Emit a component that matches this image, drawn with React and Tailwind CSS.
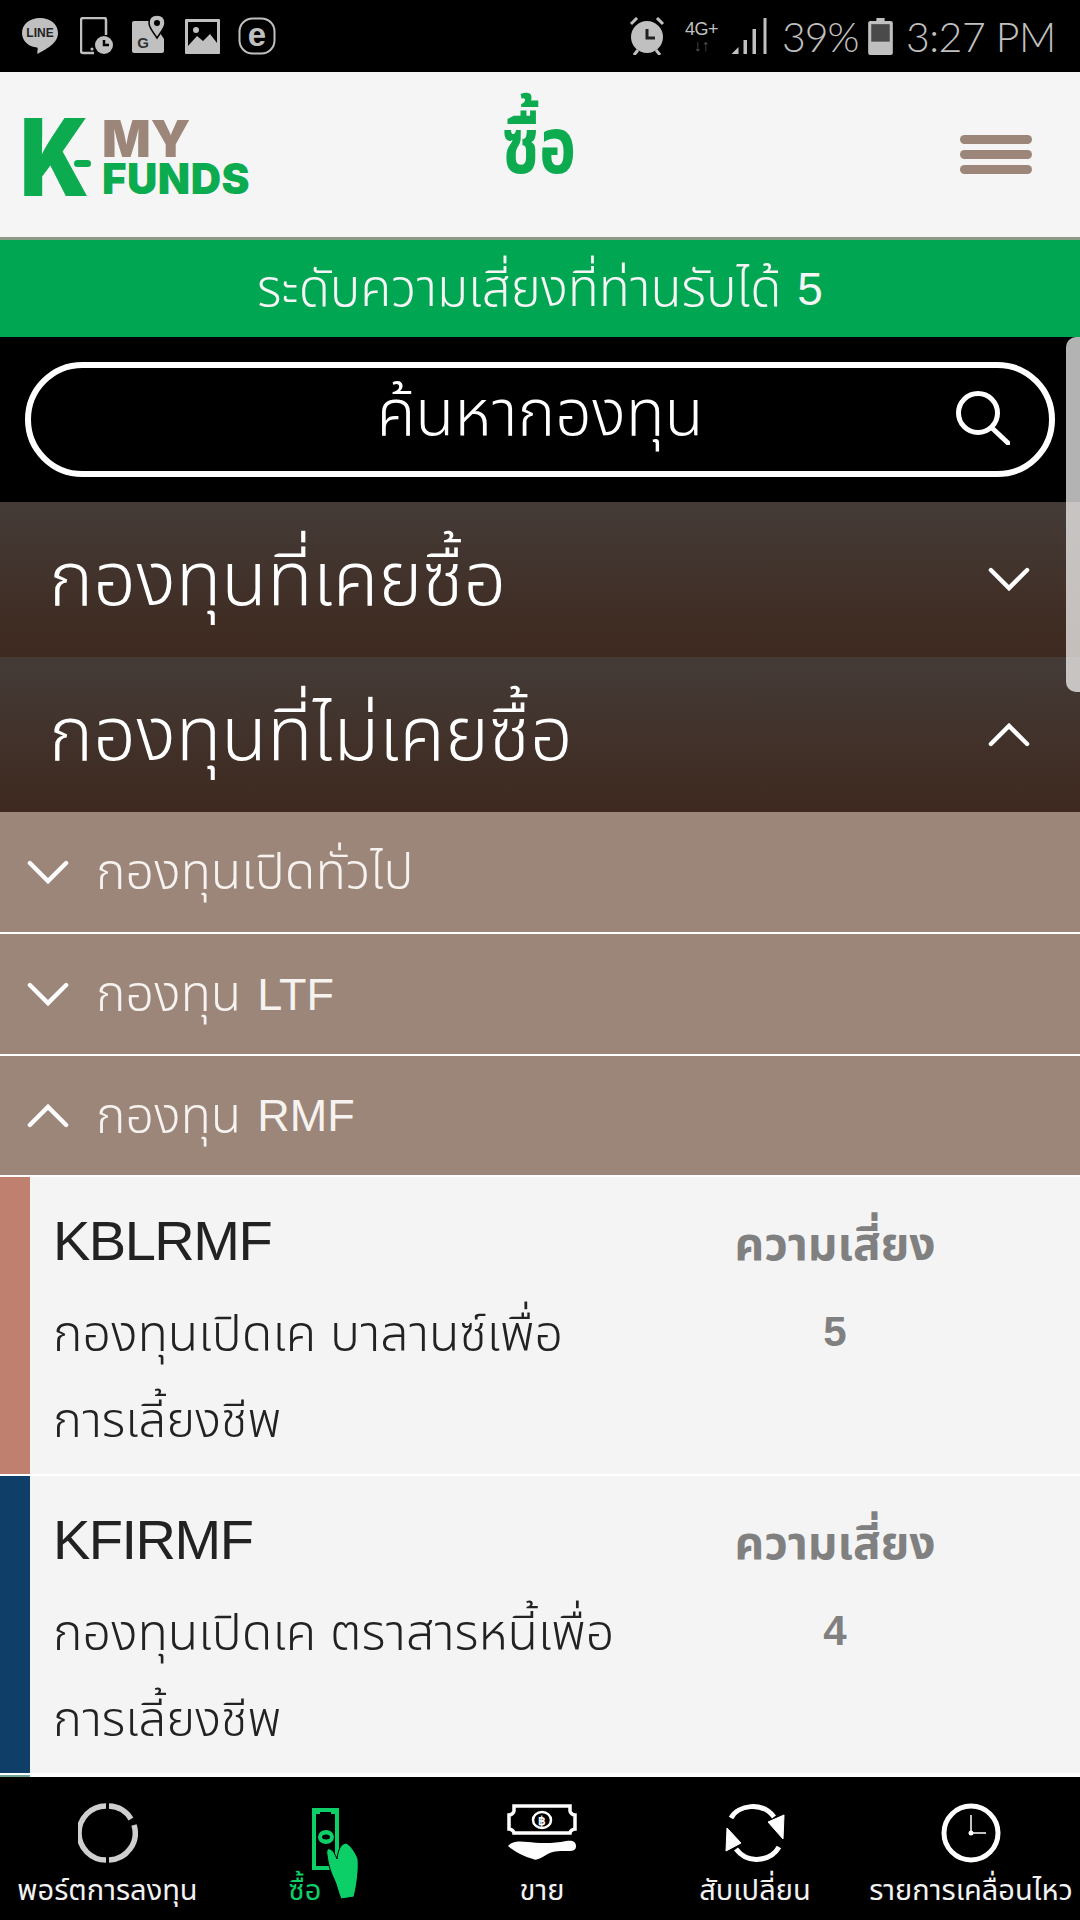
import React from "react";

const Chev = ({ up, className = "" }) => (
  <svg viewBox="0 0 44 26" className={className} fill="none" stroke="#fff" strokeWidth="4.500" strokeLinecap="round" strokeLinejoin="miter">
    <path d={up ? "M3 23 L22 4 L41 23" : "M3 3 L22 22 L41 3"} />
  </svg>
);

const Section = ({ title, up }) => (
  <div className="h-[155px] shrink-0 bg-gradient-to-b from-[#443b37] to-[#3e291f] flex items-center justify-between pl-[49px] pr-[50px]">
    <span className="text-[75px] leading-none font-[350] text-white">{title}</span>
    <Chev up={up} className="w-[42px] h-[25px]" />
  </div>
);

const Sub = ({ title, latin, up, h = "h-[120px]" }) => (
  <div className={`${h} shrink-0 bg-[#9c8679] flex items-center pl-[27px]`}>
    <Chev up={up} className="w-[42px] h-[25px]" />
    <span className="ml-[27px] text-[50px] leading-none font-[350] text-[#f5f2f0]">{title}</span>
    {latin && <span className="ml-[16px] text-[45px] leading-none text-[#f5f2f0]">{latin}</span>}
  </div>
);

const Fund = ({ code, name1, name2, risk, stripe }) => (
  <div className="h-[297px] shrink-0 flex bg-[#f4f4f4]">
    <div className={`w-[30px] shrink-0 ${stripe}`} />
    <div className="w-[705px] pl-[23px] pt-[32px] text-[#222]">
      <div className="text-[56px] leading-[64px] tracking-[-1.5px]">{code}</div>
      <div className="mt-[18px] text-[50px] leading-[86px] font-[350] whitespace-nowrap">{name1}</div>
      <div className="text-[49px] leading-[86px] font-[350]">{name2}</div>
    </div>
    <div className="w-[200px] pt-[40px] flex flex-col items-center text-[#808080] font-bold">
      <div className="text-[46px] leading-[54px] whitespace-nowrap">ความเสี่ยง</div>
      <div className="mt-[37px] text-[42px] leading-[48px]">{risk}</div>
    </div>
  </div>
);

const Status = () => (
  <div className="h-[72px] shrink-0 bg-black flex items-center justify-between pl-[21px] pr-[27px] text-[#c0c0c0]">
    <div className="flex items-center">
      <svg viewBox="0 0 38 38" className="w-[38px] h-[38px]">
        <path d="M19 1C8.500 1 1 7.500 1 16s7.500 14 15 14.500c1.500 0 0 3 .5 6.500 4-3 20.500-9 20.500-21C37 7.500 29.500 1 19 1Z" fill="#c0c0c0" />
        <text x="19" y="20" textAnchor="middle" fontSize="12" fontWeight="700" fill="#222" fontFamily="Liberation Sans">LINE</text>
      </svg>
      <svg viewBox="0 0 33 38" className="ml-[21px] w-[33px] h-[38px]">
        <path d="M14 36H3a2 2 0 0 1-2-2V3a2 2 0 0 1 2-2h21a2 2 0 0 1 2 2v15" fill="none" stroke="#c0c0c0" strokeWidth="2.500" />
        <circle cx="12" cy="32" r="1.500" fill="#c0c0c0" />
        <circle cx="24" cy="28" r="9" fill="#c0c0c0" />
        <path d="M24 23v5h5" fill="none" stroke="#000" strokeWidth="2.500" />
      </svg>
      <svg viewBox="0 0 33 40" className="ml-[19px] w-[33px] h-[40px] -mt-[2px]">
        <path d="M2 6h18l12 18v12a2 2 0 0 1-2 2H2a2 2 0 0 1-2-2V8a2 2 0 0 1 2-2Z" fill="#c0c0c0" />
        <path d="M25 0c-5 0-8 3-8 8 0 5 5 10 8 15 3-5 8-10 8-15 0-5-3-8-8-8Z" fill="#c0c0c0" stroke="#000" strokeWidth="1.500" />
        <circle cx="25" cy="8" r="3" fill="#000" />
        <text x="11" y="33" textAnchor="middle" fontSize="15" fontWeight="700" fill="#333" fontFamily="Liberation Sans">G</text>
      </svg>
      <svg viewBox="0 0 35 35" className="ml-[20px] w-[35px] h-[35px]">
        <rect width="35" height="35" rx="1" fill="#c0c0c0" />
        <rect x="3" y="3" width="29" height="26" fill="#000" />
        <path d="M3 27 L12 17 L18 22 L25 15 L32 24 V32 H3Z" fill="#c0c0c0" />
        <circle cx="11" cy="11" r="3" fill="#c0c0c0" />
      </svg>
      <svg viewBox="0 0 38 38" className="ml-[18px] w-[38px] h-[38px]">
        <rect x="1.500" y="1.500" width="35" height="35" rx="13" fill="none" stroke="#c0c0c0" strokeWidth="2" />
        <text x="19" y="29" textAnchor="middle" fontSize="33" fontWeight="700" fill="#c0c0c0" fontFamily="Liberation Sans">e</text>
      </svg>
    </div>
    <div className="flex items-center font-['Lato']">
      <svg viewBox="0 0 36 38" className="w-[36px] h-[38px]">
        <circle cx="18" cy="20" r="16" fill="#c0c0c0" />
        <path d="M18 12v9h8" fill="none" stroke="#222" strokeWidth="3" />
        <path d="M2 7 L8 1 M34 7 L28 1 M5 38 L9 33 M31 38 L27 33" stroke="#c0c0c0" strokeWidth="3" />
      </svg>
      <div className="ml-[18px] w-[37px] flex flex-col items-center leading-none font-['Liberation_Sans']">
        <span className="text-[18px] leading-[20px] tracking-[-0.5px]">4G+</span>
        <span className="text-[16px] leading-[14px] font-bold text-[#555]">↓↑</span>
      </div>
      <svg viewBox="0 0 36 38" className="ml-[10px] w-[37px] h-[38px]">
        <path d="M1 37 L8 30 V37Z" fill="#c0c0c0" />
        <rect x="13" y="23" width="3.500" height="14" fill="#c0c0c0" />
        <rect x="22" y="12" width="3.500" height="25" fill="#c0c0c0" />
        <rect x="33" y="1" width="3" height="36" fill="#c0c0c0" />
      </svg>
      <span className="ml-[15px] w-[74px] text-[41px] leading-none font-light whitespace-nowrap tracking-[-1px]">39%</span>
      <svg viewBox="0 0 24 36" className="ml-[12px] w-[25px] h-[37px]">
        <path d="M8 0h8v3h6a2 2 0 0 1 2 2v29a2 2 0 0 1-2 2H2a2 2 0 0 1-2-2V5a2 2 0 0 1 2-2h6Z" fill="#c0c0c0" />
        <rect x="3" y="6" width="18" height="17" fill="#4a4a4a" />
      </svg>
      <span className="ml-[13px] w-[147px] text-[41px] leading-none font-light whitespace-nowrap tracking-[-0.5px]">3:27 PM</span>
    </div>
  </div>
);

const Header = () => (
  <div className="h-[168px] shrink-0 bg-[#f5f5f5] border-b-[3px] border-[#8c9985] flex items-center pl-[20px] pr-[48px]">
    <div className="w-[264px] mt-[4px] flex items-center font-['Inter'] font-black">
      <span className="w-[64px] text-[107px] leading-[80px] text-[#0cab50] origin-left scale-x-[0.85]">K</span>
      <span className="w-[17px] h-[7px] rounded-full bg-[#0cab50] mt-[14px] -ml-[10px] shrink-0" />
      <div className="ml-[11px] flex flex-col">
        <span className="text-[51px] leading-[44px] text-[#9c8679]">MY</span>
        <span className="text-[42px] leading-[36px] text-[#0cab50] tracking-[0.5px]">FUNDS</span>
      </div>
    </div>
    <div className="flex-1 flex justify-center">
      <span className="text-[62px] font-bold leading-none text-[#0cab50] pr-[166px] origin-bottom scale-y-[1.25] -mt-[2px]">ซื้อ</span>
    </div>
    <div className="w-[72px] flex flex-col gap-[6px]">
      <div className="h-[9px] rounded-full bg-[#9c8679]" />
      <div className="h-[9px] rounded-full bg-[#9c8679]" />
      <div className="h-[9px] rounded-full bg-[#9c8679]" />
    </div>
  </div>
);

const NavItem = ({ w, icon, label, color = "text-[#f2f2f2]", extra = "" }) => (
  <div className={`${w} ${extra} shrink-0 flex flex-col items-center ${color}`}>
    <div className="h-[64px] mt-[24px] flex items-center justify-center">{icon}</div>
    <span className="mt-[5px] text-[29px] leading-[40px] whitespace-nowrap">{label}</span>
  </div>
);

const Nav = () => (
  <div className="h-[144px] shrink-0 bg-black flex overflow-hidden">
    <NavItem w="w-[212px]" extra="pl-[3px]" label="พอร์ตการลงทุน" icon={
      <svg viewBox="0 0 60 60" className="w-[60px] h-[60px]" fill="none" stroke="#cfcfcf" strokeWidth="5.500">
        <path d="M31 3A27 27 0 0 1 53 16" />
        <path d="M56 22A27 27 0 0 1 31 57" />
        <path d="M28 57A27 27 0 0 1 28 3" />
      </svg>} />
    <NavItem w="w-[186px]" label="ซื้อ" color="text-[#0ccf68]" icon={
      <svg viewBox="0 0 48 94" className="w-[48px] h-[94px] mt-[42px] ml-[60px]">
        <rect x="3" y="3" width="23" height="58" fill="none" stroke="#0ccf68" strokeWidth="4" />
        <path d="M2 2h7v5H2ZM20 2h7v5h-7Z" fill="#0ccf68" />
        <ellipse cx="15" cy="30" rx="8" ry="7" fill="#0ccf68" />
        <ellipse cx="15" cy="30" rx="4" ry="2.500" fill="#000" />
        <path d="M16 48C15 43 17 41 19 42C22 43 24 47 26 52C27 44 29 37 35 36C39 38 44 44 47 52C48 62 46 78 43 90L30 92C27 85 26 78 23 72C19 64 17 56 16 48Z" fill="#0ccf68" stroke="#000" strokeWidth="1" />
      </svg>} />
    <NavItem w="w-[288px]" label="ขาย" icon={
      <svg viewBox="0 0 70 58" className="w-[70px] h-[58px]">
        <path d="M7 2h56v5c0 2 3 4 5 4v14c-2 0-5 2-5 4H7c0-2-3-4-5-4V11c2 0 5-2 5-4Z" fill="none" stroke="#fff" strokeWidth="3.500" />
        <ellipse cx="35" cy="16" rx="9" ry="8" fill="none" stroke="#fff" strokeWidth="2.500" />
        <text x="35" y="21" textAnchor="middle" fontSize="12" fontWeight="700" fill="#fff" fontFamily="Liberation Sans">฿</text>
        <path d="M1 42c5-5 10-5 20-4 8 1 25 2 38-1 6-1 10 0 10 5s-4 5-10 5c-8 0-14 0-20 4-5 3-10 6-13 4C18 53 8 48 1 42Z" fill="#fff" />
      </svg>} />
    <NavItem w="w-[180px]" extra="pr-[42px]" label="สับเปลี่ยน" icon={
      <svg viewBox="0 0 62 60" className="w-[62px] h-[60px]" fill="none" stroke="#fff" strokeWidth="5">
        <path d="M7 15C14 2 38-2 50 14" />
        <path d="M55 44C47 58 24 62 12 46" />
        <path d="M60 12L59 36 44 19Z" fill="#fff" strokeWidth="1" />
        <path d="M2 48L3 25 17 40Z" fill="#fff" strokeWidth="1" />
      </svg>} />
    <NavItem w="w-[210px]" label="รายการเคลื่อนไหว" icon={
      <svg viewBox="0 0 60 60" className="w-[60px] h-[60px]" fill="none" stroke="#fff">
        <circle cx="30" cy="30" r="27" strokeWidth="5" />
        <path d="M30 12V30H45" strokeWidth="1.500" />
        <circle cx="30" cy="30" r="2.500" fill="#fff" stroke="none" />
      </svg>} />
  </div>
);

export default function App() {
  return (
    <div className="relative w-[1080px] h-[1920px] flex flex-col overflow-hidden bg-white font-['Liberation_Sans','Noto_Sans_Thai','Noto_Sans',sans-serif]">
      <Status />
      <Header />
      <div className="h-[97px] shrink-0 bg-[#00a651] flex items-center justify-center text-[#f5f5f5]">
        <span className="text-[51px] font-[350] leading-none">ระดับความเสี่ยงที่ท่านรับได้</span>
        <span className="ml-[16px] text-[46px] leading-none">5</span>
      </div>
      <div className="h-[165px] shrink-0 bg-black px-[25px] pt-[25px]">
        <div className="relative h-[115px] rounded-full border-[6px] border-white flex items-center justify-center">
          <span className="text-[64px] leading-none font-[350] text-white -mt-[14px]">ค้นหากองทุน</span>
          <svg viewBox="0 0 54 54" className="absolute right-[39px] top-[23px] w-[54px] h-[54px]" fill="none" stroke="#fff" strokeWidth="5" strokeLinecap="round">
            <circle cx="22" cy="22" r="19.500" />
            <path d="M36 37L52 52" />
          </svg>
        </div>
      </div>
      <Section title="กองทุนที่เคยซื้อ" />
      <Section title="กองทุนที่ไม่เคยซื้อ" up />
      <Sub title="กองทุนเปิดทั่วไป" />
      <div className="h-[2px] shrink-0 bg-white" />
      <Sub title="กองทุน" latin="LTF" />
      <div className="h-[2px] shrink-0 bg-white" />
      <Sub title="กองทุน" latin="RMF" up h="h-[119px]" />
      <div className="h-[2px] shrink-0 bg-white" />
      <Fund code="KBLRMF" name1="กองทุนเปิดเค บาลานซ์เพื่อ" name2="การเลี้ยงชีพ" risk="5" stripe="bg-[#c08070]" />
      <div className="h-[2px] shrink-0 bg-white" />
      <Fund code="KFIRMF" name1="กองทุนเปิดเค ตราสารหนี้เพื่อ" name2="การเลี้ยงชีพ" risk="4" stripe="bg-[#0f3f69]" />
      <div className="h-[2px] shrink-0 bg-white" />
      <div className="h-[2px] shrink-0 flex bg-white"><div className="w-[30px] bg-[#6ea596]" /></div>
      <Nav />
      <div className="absolute right-0 top-[337px] w-[14px] h-[355px] rounded-l-[10px] bg-white/70" />
    </div>
  );
}
